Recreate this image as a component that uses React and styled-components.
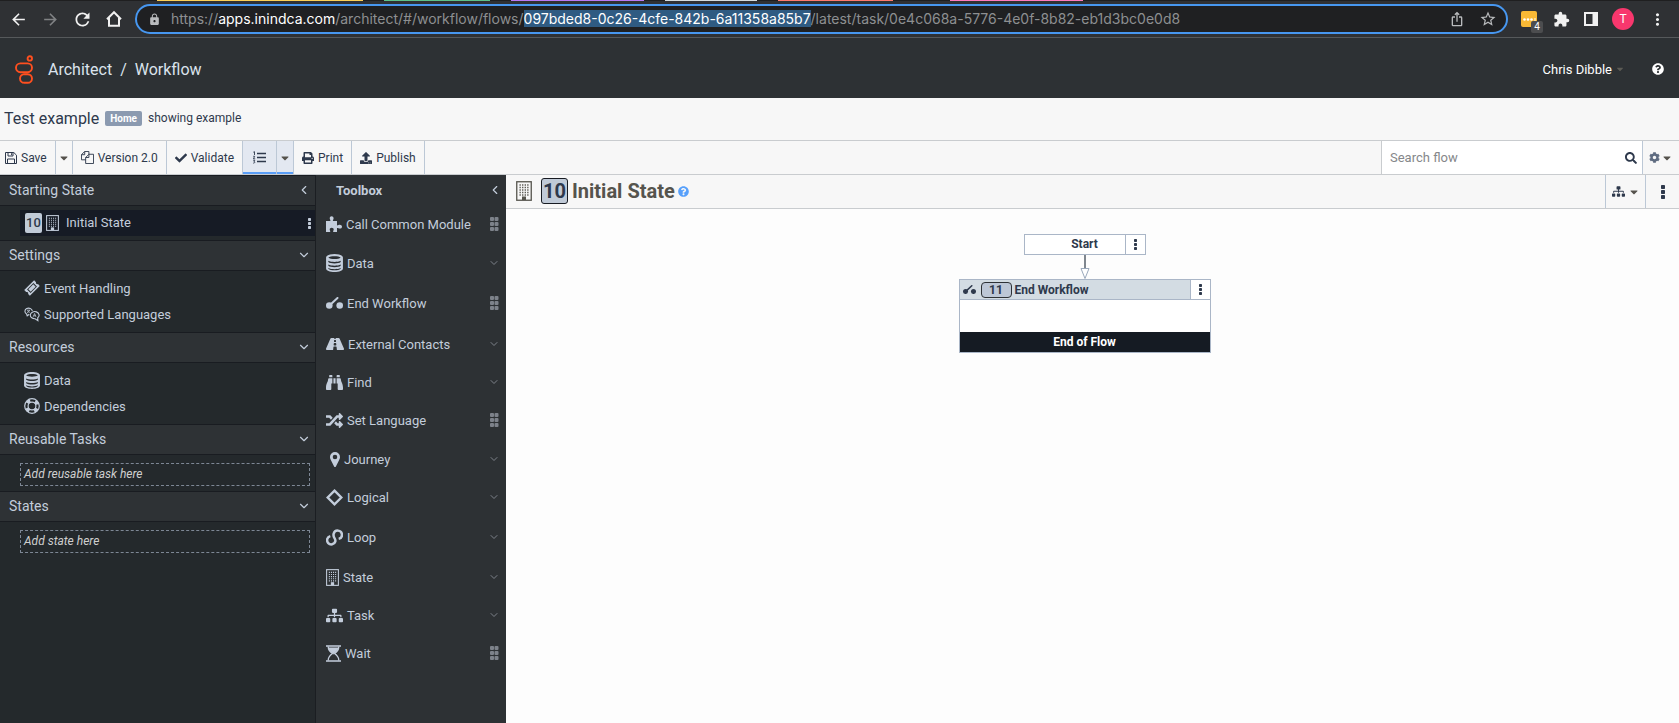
import React from 'react';
import styled, { createGlobalStyle, css } from 'styled-components';
import {
  FaCaretDown, FaCheck, FaPrint, FaUpload, FaSearch, FaCog, FaSitemap,
  FaRoad, FaBinoculars, FaRandom, FaQuestionCircle,
} from 'react-icons/fa';
import { MdArrowBack, MdArrowForward, MdRefresh, MdLock, MdStarBorder, MdExtension, MdIosShare, MdMoreVert } from 'react-icons/md';
import { ChevronDown, ChevronLeft } from 'lucide-react';

const GlobalStyle = createGlobalStyle`
  * { box-sizing: border-box; }
  body { margin: 0; font-family: Roboto, "Liberation Sans", sans-serif; font-size: 13px; color: #2e394c; background: #fdfdfd; }
  button, input { font: inherit; color: inherit; }
  button { border: 0; padding: 0; background: none; cursor: pointer; }
  a { color: inherit; text-decoration: none; }
  h1, h2, p, ul { margin: 0; padding: 0; font: inherit; }
  ul { list-style: none; }
  svg { display: block; flex: none; }
`;

const Page = styled.div`
  min-height: 100vh;
  display: flex;
  flex-direction: column;
`;

/* Browser chrome */
const TabStrip = styled.div`
  height: 1px;
  display: flex;
  background: #1f1f20;
  padding-left: 157px;
  overflow: hidden;
`;
const TabGroup = styled.span`
  flex: none;
  width: ${(p) => p.$width}px;
  margin-right: ${(p) => p.$gap}px;
  background: ${(p) => p.$color};
`;
const BrowserBar = styled.div`
  height: 37px;
  display: flex;
  align-items: center;
  background: #2f3134;
  border-bottom: 1px solid #56595b;
  color: #f1f1f1;
  padding: 0 12px 0 2px;
`;
const NavButtons = styled.div`
  display: flex;
  padding-right: 5px;
`;
const NavButton = styled.button`
  width: 32px;
  height: 24px;
  display: flex;
  align-items: center;
  justify-content: center;
  color: ${(p) => (p.$dim ? '#808284' : '#f1f1f1')};
`;
const AddressBar = styled.div`
  flex: 1;
  min-width: 0;
  height: 30px;
  display: flex;
  align-items: center;
  background: #1f2022;
  border: 2px solid #4797f0;
  border-radius: 15px;
  padding: 0 9px 0 11px;
  color: #b9bbbd;
  gap: 10px;
`;
const Url = styled.div`
  flex: 1;
  outline: 0;
  font-family: Inter, Roboto, sans-serif;
  font-size: 14px;
  line-height: 18px;
  white-space: nowrap;
  overflow: hidden;
  color: #8d8f91;
  b { font-weight: 400; color: #fff; }
  mark { background: #2f5b82; color: #fff; }
`;
const AddressActions = styled.div`
  display: flex;
  align-items: center;
  gap: 14px;
`;
const Extensions = styled.div`
  display: flex;
  align-items: center;
  gap: 14px;
  padding-left: 13px;
`;
const NoteIcon = styled.button`
  position: relative;
  width: 16px;
  height: 16px;
  border-radius: 2px;
  background: #f9b935;
  margin-right: 2px;
  display: flex;
  align-items: center;
  justify-content: center;
  color: #fff;
`;
const NoteCount = styled.span`
  position: absolute;
  left: 10px;
  top: 10px;
  width: 12px;
  height: 12px;
  border-radius: 2px;
  background: #4c4d4f;
  font-size: 10px;
  line-height: 12px;
  text-align: center;
`;
const Avatar = styled.button`
  width: 22px;
  height: 22px;
  border-radius: 50%;
  background: #f8376d;
  font-size: 12px;
  color: #fff;
`;

/* Application header */
const Header = styled.header`
  height: 60px;
  display: flex;
  align-items: center;
  background: #2d3134;
  color: #fff;
  padding: 2px 15px 0;
`;
const Crumbs = styled.nav`
  flex: 1;
  display: flex;
  gap: 8px;
  padding-left: 15px;
  font-size: 16px;
  color: #dbe3ec;
`;
const UserMenu = styled.button`
  display: flex;
  align-items: center;
  gap: 3px;
  margin-right: 27px;
  color: #fff;
  svg { color: #5c5b55; }
`;

const TitleRow = styled.div`
  height: 42px;
  display: flex;
  align-items: center;
  gap: 6px;
  padding: 0 0 2px 4px;
  background: #f7f7f7;
`;
const FlowName = styled.h1`
  font-size: 16px;
`;
const HomeTag = styled.span`
  height: 15px;
  padding: 0 5px;
  border-radius: 2px;
  background: #8b9ab0;
  color: #fff;
  font-size: 10px;
  font-weight: 700;
  line-height: 15px;
`;
const FlowNote = styled.span`
  font-size: 12px;
`;

const Toolbar = styled.div`
  height: 35px;
  display: flex;
  background: #f7f7f7;
  border-top: 1px solid #c9cccf;
  border-bottom: 1px solid #c9cccf;
`;
const ToolButton = styled.button`
  display: flex;
  align-items: center;
  justify-content: center;
  gap: 4px;
  padding: 0 8px;
  font-size: 12px;
  white-space: nowrap;
  border-right: 1px solid #bcc8d6;
  ${(p) => p.$first && css`padding-left: 5px;`}
  ${(p) => p.$narrow && css`padding: 0; width: 17px; color: #55524c;`}
  ${(p) => p.$wide && css`width: 34px;`}
  ${(p) => p.$active && css`background: #e3e8f1; box-shadow: inset 0 -2px #5a9ef7;`}
`;
const SearchBox = styled.label`
  width: 262px;
  margin-left: auto;
  display: flex;
  align-items: center;
  padding: 0 5px 0 8px;
  background: #fff;
  border-left: 1px solid #c9cccf;
  border-right: 1px solid #bcc8d6;
  input { flex: 1; min-width: 0; border: 0; padding: 0; outline: 0; background: none; }
  input::placeholder { color: #85878a; opacity: 1; }
`;
const SettingsButton = styled.button`
  width: 36px;
  display: flex;
  align-items: center;
  justify-content: center;
  color: #5e6b80;
  gap: 1px;
`;

/* Panels */
const Body = styled.div`
  flex: 1;
  display: flex;
`;
const Sidebar = styled.aside`
  flex: none;
  width: 316px;
  background: #24292c;
  color: #c3cddb;
  border-right: 1px solid #1b1e22;
`;
const SectionHead = styled.button`
  width: 100%;
  height: 31px;
  display: flex;
  align-items: center;
  justify-content: space-between;
  padding: 0 4px 1px 9px;
  background: #2e3235;
  border-top: 1px solid #191c21;
  border-bottom: 1px solid #191c21;
  font-size: 14px;
`;
const SectionBody = styled.div`
  padding: ${(p) => p.$pad};
`;
const SelectedItem = styled.div`
  height: 26px;
  display: flex;
  align-items: center;
  gap: 4px;
  padding: 0 4px 0 5px;
  background: #161b25;
  a { flex: 1; padding: 0 0 2px 3px; }
`;
const Sequence = styled.span`
  width: 17px;
  height: 20px;
  border-radius: 2px;
  background: #c0cad7;
  color: #2e394c;
  font-weight: 500;
  line-height: 19px;
  text-align: center;
`;
const NavLink = styled.a`
  height: 26px;
  display: flex;
  align-items: center;
  gap: 4px;
`;
const DropTarget = styled.p`
  height: 23px;
  padding-left: 3px;
  border: 1px dashed #7d8795;
  color: #cfcfcf;
  font-size: 12px;
  line-height: 20px;
  font-style: italic;
`;
const Toolbox = styled.aside`
  flex: none;
  width: 190px;
  background: #2d3134;
  color: #c3cddb;
`;
const ToolboxHead = styled.div`
  height: 29px;
  display: flex;
  align-items: center;
  justify-content: space-between;
  padding: 1px 4px 0 20px;
  font-weight: 700;
`;
const ToolRow = styled.li`
  height: ${(p) => ({ short: 36, regular: 38, roomy: 40, tall: 42 })[p.$size]}px;
  display: flex;
  align-items: center;
  padding: 0 7px 0 10px;
`;
const ToolLabel = styled.button`
  flex: 1;
  display: flex;
  align-items: center;
  gap: 4px;
  white-space: nowrap;
`;
const RowEnd = styled.span`
  width: 10px;
  display: flex;
  justify-content: center;
  color: #7d828a;
`;

const Editor = styled.main`
  flex: 1;
  min-width: 0;
  background: #fdfdfd;
`;
const EditorHead = styled.div`
  height: 34px;
  display: flex;
  background: #f7f7f7;
  border-bottom: 1px solid #c9cccf;
`;
const StateTitle = styled.h2`
  flex: 1;
  display: flex;
  align-items: center;
  padding: 0 0 1px 10px;
  color: #55544d;
  font-size: 20px;
  font-weight: 700;
  button { color: #57a0fb; margin-left: 3px; }
`;
const TitleSequence = styled.span`
  width: 27px;
  height: 26px;
  margin: 0 4px 0 9px;
  background: #c0cad7;
  border: 1px solid #171b22;
  border-radius: 3px;
  color: #2e394c;
  line-height: 24px;
  text-align: center;
`;
const HeadButton = styled.button`
  width: ${(p) => p.$width}px;
  display: flex;
  align-items: center;
  justify-content: center;
  gap: 3px;
  border-left: 1px solid #bcc8d6;
`;
const Canvas = styled.div`
  display: flex;
  flex-direction: column;
  align-items: center;
  padding: 25px 16px 0 0;
  font-size: 12px;
  font-weight: 700;
  color: #2e394c;
`;
const StartNode = styled.div`
  width: 122px;
  height: 21px;
  display: flex;
  background: #fff;
  border: 1px solid #aab6c7;
  span { flex: 1; padding-left: 20px; text-align: center; line-height: 19px; }
`;
const NodeMenu = styled.button`
  width: 20px;
  display: flex;
  align-items: center;
  justify-content: center;
  background: #fff;
  border-left: 1px solid #aab6c7;
`;
const ActionNode = styled.div`
  width: 252px;
  border: 1px solid #aab6c7;
  background: #fff;
`;
const ActionHead = styled.div`
  height: 20px;
  display: flex;
  align-items: center;
  gap: 3px;
  padding-left: 3px;
  background: #d3dce3;
  border-bottom: 1px solid #aab6c7;
  ${NodeMenu} { align-self: stretch; margin-left: auto; }
`;
const NodeSequence = styled.span`
  width: 31px;
  height: 16px;
  margin-left: 2px;
  border: 1px solid #2e3236;
  border-radius: 4px;
  background: #bdc7d6;
  line-height: 14px;
  text-align: center;
`;
const ActionBody = styled.div`
  height: 32px;
`;
const ActionEnd = styled.div`
  height: 20px;
  background: #151b23;
  color: #fff;
  line-height: 20px;
  text-align: center;
`;

/* Drawings */
const Logo = () => (
  <svg width="18" height="29" viewBox="0 0 18 29" fill="none" stroke="#ff4f1f" strokeWidth="1.9">
    <circle cx="14.800" cy="3.400" r="2.200" />
    <rect x="1" y="8.400" width="16" height="8.800" rx="4.400" />
    <rect x="5" y="19.200" width="12" height="8.600" rx="4.300" />
  </svg>
);
const HomeIcon = () => (
  <svg width="18" height="18" viewBox="0 0 18 18" fill="none" stroke="currentColor" strokeWidth="2">
    <path d="M2 9.200 9 2.200l7 7M4 8v7.800h10V8" />
  </svg>
);
const SidePanelIcon = () => (
  <svg width="14" height="14" viewBox="0 0 14 14">
    <path fill="currentColor" fillRule="evenodd" d="M0 0h14v14H0zM2 2v10h6.500V2z" />
  </svg>
);
const Building = ({ width = 14, height = 17 }) => (
  <svg width={width} height={height} viewBox="0 0 16 20" preserveAspectRatio="none" fill="none" stroke="currentColor">
    <rect x=".75" y=".75" width="14.500" height="18.500" strokeWidth="1.300" />
    <path d="M3.500 4h9M3.500 6.500h9M3.500 9h9M3.500 11.500h9M3.500 14h9" strokeWidth="1.300" strokeDasharray="1.300 1.270" />
    <path d="M6 15.500h4V19H6z" fill="currentColor" stroke="none" />
  </svg>
);
const SaveIcon = () => (
  <svg width="12" height="12" viewBox="0 0 12 12" fill="none" stroke="currentColor">
    <path d="M.5.5h8.300L11.500 3.200v8.300H.5zM3 .5v3.500h5V.5M2.500 11.500V7h7v4.500" />
    <path d="M6.600 1.200v2" />
  </svg>
);
const VersionIcon = () => (
  <svg width="13" height="13" viewBox="0 0 14 14" fill="none" stroke="currentColor">
    <path d="M5 9.500H.5V4L4 .5H8.500v3M4 .5V4H.5M8.500 3.500h5v10H5V7L8.500 3.500V7H5" />
  </svg>
);
const Dots = ({ size = 3 }) => (
  <svg width={size} height={size * 3 + 2} viewBox={`0 0 ${size} ${size * 3 + 2}`} fill="currentColor">
    {[0, 1, 2].map((i) => <rect key={i} width={size} height={size} y={i * (size + 1)} rx=".7" />)}
  </svg>
);
const Grip = () => (
  <svg width="9" height="14" viewBox="0 0 9 14" fill="currentColor">
    {[0, 5, 10].map((y) => (
      <g key={y}><rect y={y} width="4" height="4" rx="1" /><rect x="4.500" y={y} width="4" height="4" rx="1" /></g>
    ))}
  </svg>
);
const Ticket = () => (
  <svg width="16" height="16" viewBox="0 0 16 16" fill="currentColor">
    <g transform="rotate(-45 8 8)">
      <path fillRule="evenodd" d="M1 4h14v2.700a1.500 1.500 0 0 0 0 2.800V12H1V9.500a1.500 1.500 0 0 0 0-2.800zM3.500 5.500v5h9v-5z" />
      <path d="M4.500 6.300h7v3.400h-7z" />
    </g>
  </svg>
);
const Languages = () => (
  <svg width="16" height="15" viewBox="0 0 16 15" fill="none" stroke="currentColor" strokeWidth="1.100">
    <path d="M5.300 7.200 3.200 8.800 2.600 7A3.700 3.200 0 1 1 8.300 4" />
    <path d="M6.300 8.200a4.400 3.600 0 1 1 7.400 2.600l.2 2.900-2.800-2a4.400 3.600 0 0 1-4.800-3.500z" />
    <path d="M3 3.200h3M5.500 3.200C5.300 4.500 4 5.500 3 5.700M3.600 3.700c.3.800 1 1.500 2 1.800M9.200 9.800l1.400-3.300 1.300 3.300M9.800 8.800h1.700" strokeWidth=".8" />
  </svg>
);
const Stack = ({ size = 16 }) => (
  <svg width={size - 1} height={size} viewBox="0 0 15 16">
    <path fill="currentColor" d="M0 3.200C0 1.400 3.300 0 7.500 0S15 1.400 15 3.200v9.600c0 1.800-3.300 3.200-7.500 3.200S0 14.600 0 12.800z" />
    <path fill="#292d31" d="M2 3.100C4 1.500 11 1.500 13 3.100 11 4.900 4 4.900 2 3.100zM2 6c2.500 1.400 8.500 1.400 11 0v1.200c-2 1.700-9 1.700-11 0zM2 9.300c2.500 1.400 8.500 1.400 11 0v1.200c-2 1.700-9 1.700-11 0zM2 12.500c2.500 1.400 8.500 1.400 11 0v.6c-2 1.900-9 1.900-11 0z" />
  </svg>
);
const Ring = () => (
  <svg width="16" height="16" viewBox="0 0 16 16" fill="none" stroke="currentColor">
    <circle cx="8" cy="8" r="7.300" strokeWidth="1.200" />
    <circle cx="8" cy="8" r="3.900" strokeWidth="1.200" />
    <circle cx="8" cy="8" r="5.500" strokeWidth="3.600" strokeDasharray="3.640 5" strokeDashoffset="-2.500" />
  </svg>
);
const Puzzle = () => (
  <svg width="16" height="16" viewBox="0 0 16 16" fill="currentColor">
    <path d="M0 5h4.300c.5-.9-.6-1.400-.6-2.700C3.700 1 4.500.2 5.600.2s2 .8 2 2c0 1.400-1 1.900-.6 2.800h4v4.300c1 .4 1.400-.6 2.800-.6 1.200 0 2.200.8 2.200 2s-1 1.900-2.200 1.900c-1.400 0-1.900-1-2.800-.5V16H7.300c-.6-.8.400-1.300.4-2.400 0-1-.8-1.800-2-1.800s-2 .8-2 1.800c0 1.100 1 1.600.4 2.400H0z" />
  </svg>
);
const Disconnect = ({ width = 17 }) => (
  <svg width={width} height={width * 12 / 17} viewBox="0 0 17 12" fill="currentColor">
    <circle cx="3.300" cy="8.500" r="3.300" />
    <circle cx="13.700" cy="8.500" r="3.300" />
    <path d="M4 8 11.500 1" fill="none" stroke="currentColor" strokeWidth="2" strokeLinecap="round" />
  </svg>
);
const Pin = () => (
  <svg width="14" height="15" viewBox="0 0 14 15">
    <path fill="currentColor" fillRule="evenodd" d="M9 0a5 5 0 0 0-5 5c0 1.500.6 2.500 1.200 3.800L8.100 14.400a1 1 0 0 0 1.800 0L12.800 8.800C13.400 7.500 14 6.500 14 5a5 5 0 0 0-5-5zM9 2.700a2.300 2.300 0 1 1 0 4.600 2.300 2.300 0 0 1 0-4.600z" />
  </svg>
);
const Diamond = () => (
  <svg width="17" height="17" viewBox="0 0 17 17" fill="none" stroke="currentColor" strokeWidth="2.400">
    <path d="M8.500 1.700 15.300 8.500 8.500 15.300 1.700 8.500z" />
  </svg>
);
const LoopIcon = () => (
  <svg width="17" height="17" viewBox="0 0 17 17" fill="none" stroke="currentColor" strokeWidth="2.500">
    <path d="M4.300 7.100a4.200 4.200 0 1 0 5 5.400c.3-1.200 0-2.200-.8-3.400C7.500 7.600 7.200 6.500 7.700 4.700A4.200 4.200 0 1 1 12.700 9.900" />
  </svg>
);
const Hourglass = () => (
  <svg width="15" height="17" viewBox="0 0 15 17" fill="none" stroke="currentColor">
    <path d="M0 1h15M0 16h15" strokeWidth="1.700" />
    <path d="M2.200 1.500c0 4 2 5.500 4.300 7-2.300 1.500-4.300 3-4.300 7M12.800 1.500c0 4-2 5.500-4.300 7 2.300 1.500 4.300 3 4.300 7" strokeWidth="1.300" />
    <path d="M2.800 3h9.400c-.6 3-2.500 4-4.700 5.800C5.300 7 3.400 6 2.800 3z" fill="currentColor" />
  </svg>
);
const Arrow = () => (
  <svg width="10" height="24" viewBox="0 0 10 24">
    <path d="M5 0v13" stroke="#7f868e" strokeWidth="2" />
    <path d="M1 13.500h8L5 23.500z" fill="#fff" stroke="#9aa8bb" />
  </svg>
);
const NumberedList = () => (
  <svg width="13" height="13" viewBox="0 0 13 13" fill="none" stroke="currentColor">
    <path d="M4 2.500H13M4 6.500H13M4 10.500H13" strokeWidth="1.700" />
    <path d="M.3 1.200 1.500.7V4M.2 5.300h1.500L.4 7.800h1.800M.2 9.300h1.600L1 10.500c1.300.1 1 1.800-.8 1.600" strokeWidth=".9" />
  </svg>
);

const TAB_GROUPS = [
  ['#fcd058', 206, 21], ['#5ec28b', 106, 21], ['#b87af5', 133, 21],
  ['#d5dbde', 92, 21], ['#ff7a6e', 115, 57], ['#ff7cc0', 133, 0],
];

const TOOLS = [
  { label: 'Call Common Module', icon: <Puzzle />, size: 'roomy', drag: true },
  { label: 'Data', icon: <Stack size={18} />, size: 'regular' },
  { label: 'End Workflow', icon: <Disconnect />, size: 'tall', drag: true },
  { label: 'External Contacts', icon: <FaRoad size={18} />, size: 'roomy' },
  { label: 'Find', icon: <FaBinoculars size={17} />, size: 'short' },
  { label: 'Set Language', icon: <FaRandom size={17} />, size: 'roomy', drag: true },
  { label: 'Journey', icon: <Pin />, size: 'regular' },
  { label: 'Logical', icon: <Diamond />, size: 'regular' },
  { label: 'Loop', icon: <LoopIcon />, size: 'tall' },
  { label: 'State', icon: <Building width={13} />, size: 'regular' },
  { label: 'Task', icon: <FaSitemap size={17} />, size: 'regular' },
  { label: 'Wait', icon: <Hourglass />, size: 'regular', drag: true },
];

function Section({ title, pad, collapse, children }) {
  const Chevron = collapse ? ChevronLeft : ChevronDown;
  return (
    <section>
      <SectionHead>{title}<Chevron size={14} /></SectionHead>
      <SectionBody $pad={pad}>{children}</SectionBody>
    </section>
  );
}

export default function App() {
  return (
    <Page>
      <GlobalStyle />
      <TabStrip>
        {TAB_GROUPS.map(([color, width, gap]) => <TabGroup key={color} $color={color} $width={width} $gap={gap} />)}
      </TabStrip>
      <BrowserBar>
        <NavButtons>
          <NavButton aria-label="Back"><MdArrowBack size={19} /></NavButton>
          <NavButton aria-label="Forward" $dim><MdArrowForward size={19} /></NavButton>
          <NavButton aria-label="Reload"><MdRefresh size={21} /></NavButton>
          <NavButton aria-label="Home page"><HomeIcon /></NavButton>
        </NavButtons>
        <AddressBar>
          <MdLock size={13} />
          <Url role="textbox" aria-label="Address" contentEditable suppressContentEditableWarning spellCheck={false}>
            https://<b>apps.inindca.com</b>/architect/#/workflow/flows/<mark>097bded8-0c26-4cfe-842b-6a11358a85b7</mark>/latest/task/0e4c068a-5776-4e0f-8b82-eb1d3bc0e0d8
          </Url>
          <AddressActions>
            <button aria-label="Share"><MdIosShare size={16} /></button>
            <button aria-label="Bookmark"><MdStarBorder size={18} /></button>
          </AddressActions>
        </AddressBar>
        <Extensions>
          <NoteIcon aria-label="Notes">
            <svg width="13" height="3" viewBox="0 0 13 3" fill="currentColor"><circle cx="1.500" cy="1.500" r="1.300" /><circle cx="5" cy="1.500" r="1.300" /><circle cx="8.500" cy="1.500" r="1.300" /><rect x="11.500" width="1" height="3" /></svg>
            <NoteCount>4</NoteCount>
          </NoteIcon>
          <button aria-label="Extensions"><MdExtension size={17} /></button>
          <button aria-label="Side panel"><SidePanelIcon /></button>
          <Avatar>T</Avatar>
          <button aria-label="Browser menu"><MdMoreVert size={19} /></button>
        </Extensions>
      </BrowserBar>

      <Header>
        <a href="#home" aria-label="Genesys"><Logo /></a>
        <Crumbs>
          <a href="#architect">Architect</a><span>/</span><a href="#workflow">Workflow</a>
        </Crumbs>
        <UserMenu>Chris Dibble<FaCaretDown size={10} /></UserMenu>
        <button aria-label="Help"><FaQuestionCircle size={12} /></button>
      </Header>

      <TitleRow>
        <FlowName>Test example</FlowName>
        <HomeTag>Home</HomeTag>
        <FlowNote>showing example</FlowNote>
      </TitleRow>

      <Toolbar>
        <ToolButton $first><SaveIcon />Save</ToolButton>
        <ToolButton $narrow aria-label="Save options"><FaCaretDown size={12} /></ToolButton>
        <ToolButton><VersionIcon />Version 2.0</ToolButton>
        <ToolButton><FaCheck size={12} />Validate</ToolButton>
        <ToolButton $wide $active aria-label="Sequence"><NumberedList /></ToolButton>
        <ToolButton $narrow $active aria-label="Sequence options"><FaCaretDown size={12} /></ToolButton>
        <ToolButton><FaPrint size={12} />Print</ToolButton>
        <ToolButton><FaUpload size={12} />Publish</ToolButton>
        <SearchBox>
          <input type="text" placeholder="Search flow" aria-label="Search flow" />
          <FaSearch size={12} />
        </SearchBox>
        <SettingsButton aria-label="Settings"><FaCog size={11} /><FaCaretDown size={12} color="#55524c" /></SettingsButton>
      </Toolbar>

      <Body>
        <Sidebar>
          <Section title="Starting State" pad="4px 0 4px 20px" collapse>
            <SelectedItem>
              <Sequence>10</Sequence>
              <Building width={13} height={16} />
              <a href="#initial">Initial State</a>
              <button aria-label="State menu"><Dots /></button>
            </SelectedItem>
          </Section>
          <Section title="Settings" pad="4px 0 5px 24px">
            <NavLink href="#events"><Ticket />Event Handling</NavLink>
            <NavLink href="#languages"><Languages />Supported Languages</NavLink>
          </Section>
          <Section title="Resources" pad="4px 0 5px 24px">
            <NavLink href="#data"><Stack size={17} />Data</NavLink>
            <NavLink href="#dependencies"><Ring />Dependencies</NavLink>
          </Section>
          <Section title="Reusable Tasks" pad="8px 5px 5px 20px">
            <DropTarget>Add reusable task here</DropTarget>
          </Section>
          <Section title="States" pad="8px 5px 5px 20px">
            <DropTarget>Add state here</DropTarget>
          </Section>
        </Sidebar>

        <Toolbox>
          <ToolboxHead>Toolbox<button aria-label="Collapse toolbox"><ChevronLeft size={14} /></button></ToolboxHead>
          <ul>
            {TOOLS.map((t) => (
              <ToolRow key={t.label} $size={t.size}>
                <ToolLabel>{t.icon}{t.label}</ToolLabel>
                <RowEnd>{t.drag ? <Grip /> : <ChevronDown size={12} />}</RowEnd>
              </ToolRow>
            ))}
          </ul>
        </Toolbox>

        <Editor>
          <EditorHead>
            <StateTitle>
              <Building width={16} height={20} />
              <TitleSequence>10</TitleSequence>
              Initial State
              <button aria-label="Help on states"><FaQuestionCircle size={11} /></button>
            </StateTitle>
            <HeadButton $width={40} aria-label="Layout"><FaSitemap size={13} /><FaCaretDown size={12} color="#55524c" /></HeadButton>
            <HeadButton $width={34} aria-label="More actions"><Dots size={4} /></HeadButton>
          </EditorHead>
          <Canvas>
            <StartNode>
              <span>Start</span>
              <NodeMenu aria-label="Start menu"><Dots /></NodeMenu>
            </StartNode>
            <Arrow />
            <ActionNode>
              <ActionHead>
                <Disconnect width={13} />
                <NodeSequence>11</NodeSequence>
                End Workflow
                <NodeMenu aria-label="Action menu"><Dots /></NodeMenu>
              </ActionHead>
              <ActionBody />
              <ActionEnd>End of Flow</ActionEnd>
            </ActionNode>
          </Canvas>
        </Editor>
      </Body>
    </Page>
  );
}
